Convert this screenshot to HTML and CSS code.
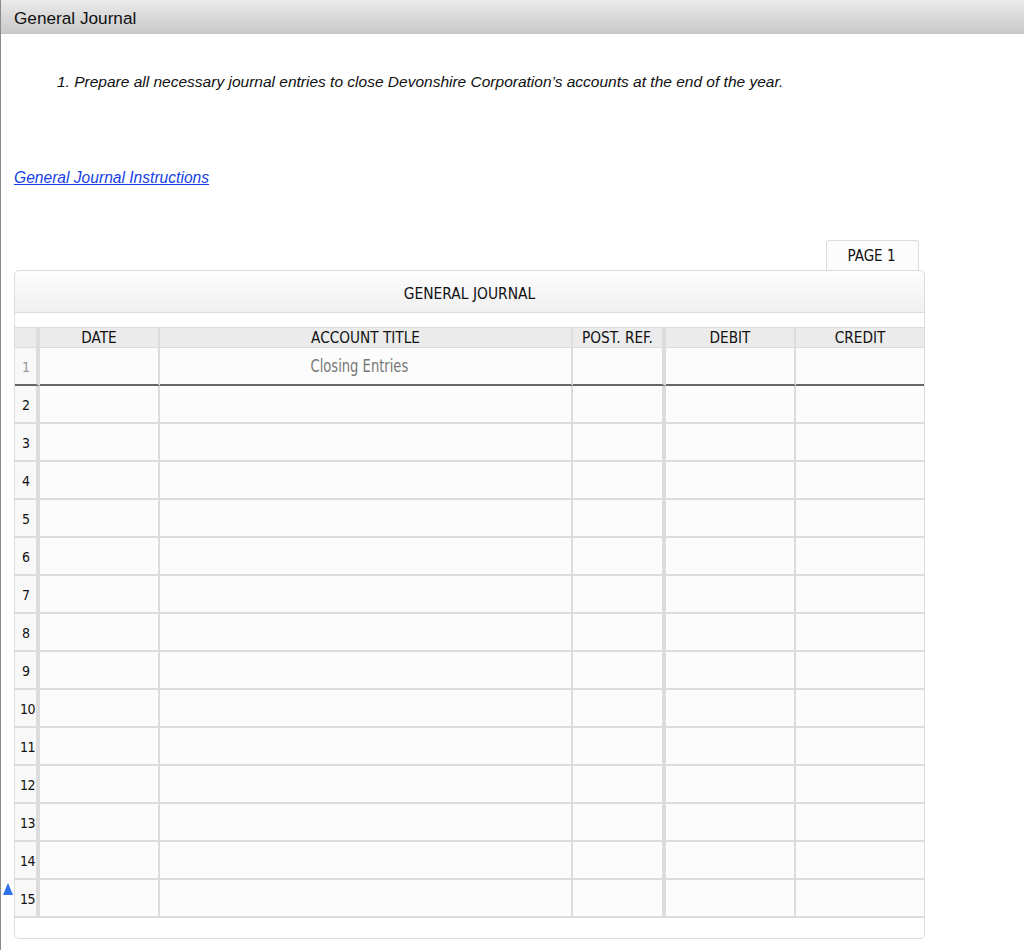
FILE: index.html
```html
<!DOCTYPE html>
<html>
  <head>
    <meta charset="utf-8" />
    <title>General Journal</title>
    <link rel="stylesheet" href="styles.css">
  </head>
  <body>
    <div class="title-bar">General Journal</div>
    <div class="content">
      <p class="question">1. Prepare all necessary journal entries to close Devonshire Corporation’s accounts at the end of the year.</p>
      <a class="instructions" href="#">General Journal Instructions</a>
      <div class="tab-row">
        <div class="page-tab">PAGE 1</div>
      </div>
      <div class="journal">
        <div class="journal-title">GENERAL JOURNAL</div>
        <div class="journal-gap"></div>
        <table class="grid">
          <colgroup>
            <col class="c-num">
            <col class="c-date">
            <col class="c-title">
            <col class="c-post">
            <col class="c-debit">
            <col class="c-credit">
          </colgroup>
          <thead>
            <tr>
              <th class="num"></th>
              <th class="date">DATE</th>
              <th>ACCOUNT TITLE</th>
              <th class="post">POST. REF.</th>
              <th>DEBIT</th>
              <th class="credit">CREDIT</th>
            </tr>
          </thead>
          <tbody>
            <tr class="first"><td class="num">1</td><td class="date"></td><td class="entry"><span class="entry-text">Closing Entries</span></td><td class="post"></td><td></td><td class="credit"></td></tr>
            <tr><td class="num">2</td><td class="date"></td><td></td><td class="post"></td><td></td><td class="credit"></td></tr>
            <tr><td class="num">3</td><td class="date"></td><td></td><td class="post"></td><td></td><td class="credit"></td></tr>
            <tr><td class="num">4</td><td class="date"></td><td></td><td class="post"></td><td></td><td class="credit"></td></tr>
            <tr><td class="num">5</td><td class="date"></td><td></td><td class="post"></td><td></td><td class="credit"></td></tr>
            <tr><td class="num">6</td><td class="date"></td><td></td><td class="post"></td><td></td><td class="credit"></td></tr>
            <tr><td class="num">7</td><td class="date"></td><td></td><td class="post"></td><td></td><td class="credit"></td></tr>
            <tr><td class="num">8</td><td class="date"></td><td></td><td class="post"></td><td></td><td class="credit"></td></tr>
            <tr><td class="num">9</td><td class="date"></td><td></td><td class="post"></td><td></td><td class="credit"></td></tr>
            <tr><td class="num two">10</td><td class="date"></td><td></td><td class="post"></td><td></td><td class="credit"></td></tr>
            <tr><td class="num two">11</td><td class="date"></td><td></td><td class="post"></td><td></td><td class="credit"></td></tr>
            <tr><td class="num two">12</td><td class="date"></td><td></td><td class="post"></td><td></td><td class="credit"></td></tr>
            <tr><td class="num two">13</td><td class="date"></td><td></td><td class="post"></td><td></td><td class="credit"></td></tr>
            <tr><td class="num two">14</td><td class="date"></td><td></td><td class="post"></td><td></td><td class="credit"></td></tr>
            <tr><td class="num two">15</td><td class="date"></td><td></td><td class="post"></td><td></td><td class="credit"></td></tr>
          </tbody>
        </table>
        <span class="marker"></span>
      </div>
    </div>
  </body>
</html>
```

FILE: styles.css
```css
html,
body {
  padding: 0;
  margin: 0;
  height: 100%;
  background-color: #fff;
}

body {
  height: 950px;
  overflow: hidden;
  box-sizing: border-box;
  border-left: 1px solid #8a8a8a;
  font-family: "Liberation Sans", Arial, sans-serif;
  color: #111;
}

.title-bar {
  height: 33px;
  margin-left: -1px;
  padding-left: 14px;
  line-height: 37px;
  font-size: 17.2px;
  background: linear-gradient(#ebebeb, #c9c9c9);
  border-bottom: 1px solid #c4c4c4;
}

.content {
  padding: 0 98px 0 13px;
}

.question {
  margin: 0;
  padding: 39px 0 0 43px;
  font-size: 15.5px;
  line-height: 18px;
  font-style: italic;
}

.instructions {
  display: block;
  margin-top: 78px;
  font-size: 15.6px;
  line-height: 18px;
  font-style: italic;
  color: #1541e6;
}

.tab-row {
  display: flex;
  justify-content: flex-end;
  margin-top: 53px;
  padding-right: 7px;
}

.page-tab {
  box-sizing: border-box;
  width: 93px;
  height: 30px;
  padding-right: 2px;
  line-height: 30px;
  text-align: center;
  font-family: "DejaVu Sans Condensed", "DejaVu Sans", sans-serif;
  font-size: 15px;
  background-color: #fcfcfc;
  border: 1px solid #dcdcdc;
  border-bottom: 0;
  border-radius: 3px 3px 0 0;
}

.journal {
  position: relative;
  width: 909px;
  height: 667px;
  border: 1px solid #dcdcdc;
  border-radius: 5px;
  font-family: "DejaVu Sans Condensed", "DejaVu Sans", sans-serif;
}

.journal-title {
  height: 41px;
  line-height: 47px;
  text-align: center;
  font-size: 15.4px;
  background: linear-gradient(#fdfdfd, #f0f0f0);
  border-bottom: 1px solid #dcdcdc;
  border-radius: 5px 5px 0 0;
}

.journal-gap {
  height: 14px;
}

.grid {
  width: 909px;
  table-layout: fixed;
  border-collapse: separate;
  border-spacing: 0;
}

.c-num { width: 25px; }
.c-date { width: 120px; }
.c-title { width: 413px; }
.c-post { width: 93px; }
.c-debit { width: 130px; }
.c-credit { width: 128px; }

.grid th {
  box-sizing: border-box;
  height: 21px;
  padding: 0;
  font-size: 15.2px;
  font-weight: normal;
  background-color: #ebebeb;
  border-top: 1px solid #dcdcdc;
  border-bottom: 1px solid #dcdcdc;
  border-right: 2px solid #dcdcdc;
}

.grid td {
  box-sizing: border-box;
  height: 38px;
  padding: 0;
  background-color: #fcfcfc;
  border-bottom: 2px solid #dcdcdc;
  border-right: 2px solid #dcdcdc;
}

.grid .num {
  border-right: 4px solid #dcdcdc;
}

.grid td.num {
  padding: 1px 0 0 7px;
  font-size: 14px;
  letter-spacing: -0.5px;
  background-color: #f8f8f8;
}

.grid td.two {
  padding-left: 5px;
}

.grid .post {
  border-right: 4px solid #dcdcdc;
}

.grid .credit {
  border-right: 0;
}

.grid .first td {
  border-bottom-color: #666;
}

.grid .first .num {
  color: #999;
}

.grid .entry {
  text-align: center;
  padding: 0 12px 2px 0;
  color: #777;
}

.entry-text {
  display: inline-block;
  font-size: 18px;
  transform: scaleX(0.81);
}

.marker {
  position: absolute;
  left: -12px;
  top: 612px;
  width: 0;
  height: 0;
  border-left: 5.5px solid transparent;
  border-right: 5.5px solid transparent;
  border-bottom: 12px solid #2b73e8;
}
```
